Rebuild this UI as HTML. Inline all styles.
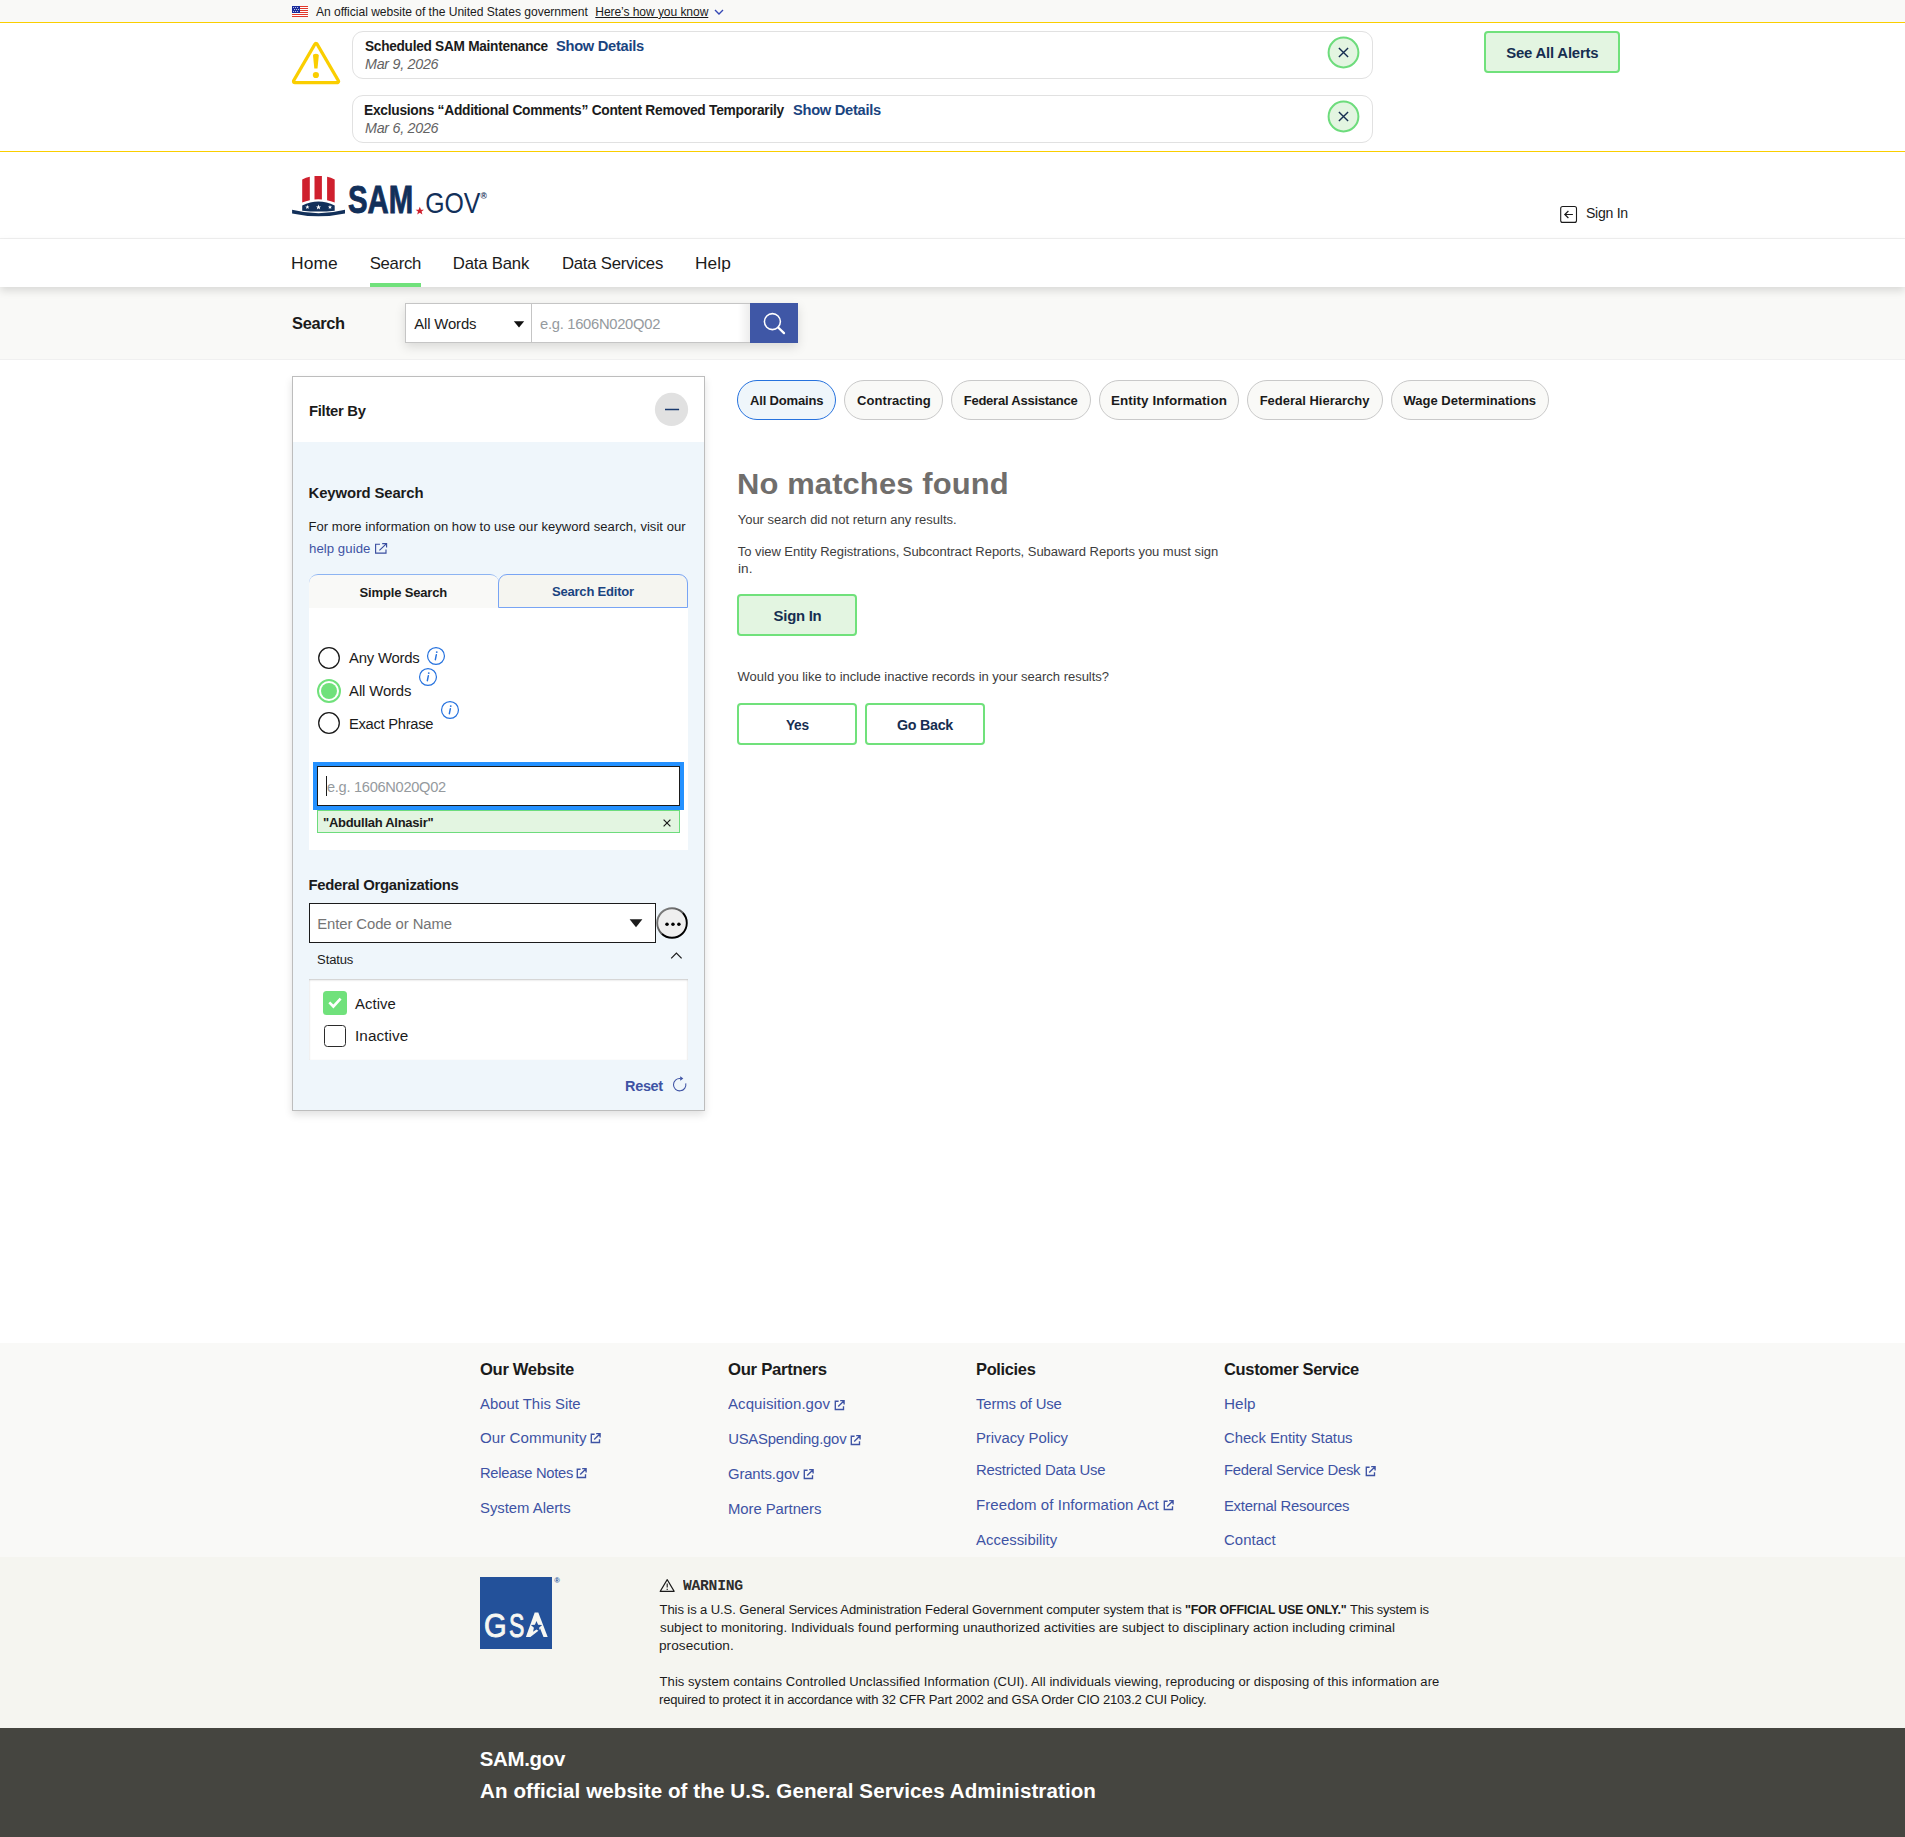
<!DOCTYPE html>
<html lang="en"><head><meta charset="utf-8"><title>SAM.gov | Search</title>
<style>

html,body{margin:0;padding:0;background:#fff;}
#page{position:relative;width:1905px;height:1837px;overflow:hidden;background:#fff;font-family:"Liberation Sans",sans-serif;color:#1b1b1b;}
.t{position:absolute;white-space:nowrap;line-height:40px;display:block;transform-origin:0 50%;}
a.t{text-decoration:none;color:inherit;}
h1.t,h2.t,h3.t,p.t{margin:0;font-weight:400;}
.b{position:absolute;box-sizing:border-box;}
svg{position:absolute;overflow:visible;}
.pill{position:absolute;box-sizing:border-box;top:380px;height:40px;border-radius:20px;border:1px solid #c9c9c9;background:#f9f9f7;}
.btn{position:absolute;box-sizing:border-box;border:2px solid #70e17b;border-radius:4px;background:#e3f5e1;}

</style></head>
<body>
<div id="page">
<header>
<div class="b" style="left:0;top:0;width:1905px;height:22px;background:#f9f9f7;"></div>
<svg style="left:292px;top:6px" width="16" height="11" viewBox="0 0 16 11">
<rect width="16" height="11" fill="#fff"/>
<g fill="#e1382b" shape-rendering="crispEdges"><rect y="0" width="16" height="1"/><rect y="2" width="16" height="1"/><rect y="4" width="16" height="1"/><rect y="6" width="16" height="1"/><rect y="8" width="16" height="1"/><rect y="10" width="16" height="1"/></g>
<rect width="8" height="7" fill="#1a2c9c" shape-rendering="crispEdges"/>
<g fill="#fff"><circle cx="1.6" cy="1.6" r=".5"/><circle cx="3.6" cy="1.6" r=".5"/><circle cx="5.6" cy="1.6" r=".5"/><circle cx="2.6" cy="3.5" r=".5"/><circle cx="4.6" cy="3.5" r=".5"/><circle cx="6.6" cy="3.5" r=".5"/><circle cx="1.6" cy="5.4" r=".5"/><circle cx="3.6" cy="5.4" r=".5"/><circle cx="5.6" cy="5.4" r=".5"/></g>
</svg>
<span class="t" style="left:315.90px;top:-8.0px;font-size:12.09px;letter-spacing:-0.022px;">An official website of the United States government</span>
<span class="t" style="left:595.26px;top:-8.0px;font-size:12.09px;letter-spacing:-0.082px;text-decoration:underline;text-underline-offset:1px;text-decoration-thickness:1px;">Here’s how you know</span>
<svg style="left:713.9px;top:8px" width="10" height="8" viewBox="0 0 10 8"><path d="M1 2.1 L5 6 L9 2.1" fill="none" stroke="#3548b5" stroke-width="1.4"/></svg>
<div class="b" style="left:0;top:22px;width:1905px;height:130px;border-top:1px solid #face00;border-bottom:1px solid #face00;background:#fff;"></div>
<svg style="left:290px;top:40px" width="52" height="46" viewBox="0 0 52 46">
<path d="M26 4.9 L47.1 41.3 L4.9 41.3 Z" fill="#face00" stroke="#face00" stroke-width="6" stroke-linejoin="round"/><path d="M26 5.4 L46.7 41.1 L5.3 41.1 Z" fill="#fff"/>
<path d="M23 15.5 Q23 13.8 25.9 13.8 Q28.8 13.8 28.8 15.5 L27.5 28.6 L24.3 28.6 Z" fill="#face00"/>
<circle cx="25.9" cy="35" r="3.1" fill="#face00"/>
</svg>
<div class="b" style="left:352px;top:31px;width:1021px;height:48px;border:1px solid #e1e1e1;border-radius:11px;background:#fff;"></div>
<svg style="left:1327.4px;top:35.5px" width="33" height="33" viewBox="0 0 33 33"><circle cx="16.5" cy="16.5" r="14.9" fill="#e3f5e1" stroke="#6ddc7c" stroke-width="2"/><path d="M11.9 11.9 L21.1 21.1 M21.1 11.9 L11.9 21.1" stroke="#162e51" stroke-width="1.4" fill="none"/></svg>
<div class="b" style="left:352px;top:95px;width:1021px;height:48px;border:1px solid #e1e1e1;border-radius:11px;background:#fff;"></div>
<svg style="left:1327.4px;top:99.5px" width="33" height="33" viewBox="0 0 33 33"><circle cx="16.5" cy="16.5" r="14.9" fill="#e3f5e1" stroke="#6ddc7c" stroke-width="2"/><path d="M11.9 11.9 L21.1 21.1 M21.1 11.9 L11.9 21.1" stroke="#162e51" stroke-width="1.4" fill="none"/></svg>
<span class="t" style="left:364.99px;top:26.0px;font-size:14.88px;font-weight:700;letter-spacing:-0.298px;transform:scaleX(0.9181);">Scheduled SAM Maintenance</span>
<a class="t" href="#" style="left:556.47px;top:26.0px;font-size:14.88px;font-weight:700;color:#1a4480;letter-spacing:-0.298px;transform:scaleX(0.9868);">Show Details</a>
<span class="t" style="left:365.18px;top:44.0px;font-size:14.88px;color:#636363;font-style:italic;letter-spacing:-0.298px;transform:scaleX(0.9623);">Mar 9, 2026</span>
<span class="t" style="left:364.34px;top:90.0px;font-size:14.88px;font-weight:700;letter-spacing:-0.298px;transform:scaleX(0.9270);">Exclusions “Additional Comments” Content Removed Temporarily</span>
<a class="t" href="#" style="left:792.77px;top:90.0px;font-size:14.88px;font-weight:700;color:#1a4480;letter-spacing:-0.298px;transform:scaleX(0.9868);">Show Details</a>
<span class="t" style="left:365.18px;top:108.0px;font-size:14.88px;color:#636363;font-style:italic;letter-spacing:-0.298px;transform:scaleX(0.9623);">Mar 6, 2026</span>
<div class="btn" style="left:1484px;top:31px;width:136px;height:42px;"></div>
<a class="t" href="#" style="left:1506.27px;top:33.0px;font-size:14.88px;font-weight:700;color:#162e51;letter-spacing:-0.191px;">See All Alerts</a>
<svg style="left:288px;top:170px" width="204" height="50" viewBox="288 170 204 50">
<g fill="#cf202e">
<path d="M302.2 179.4 Q306 177.5 309.8 176.8 L309.8 200.2 Q306 201 302.2 202.6 Z"/>
<path d="M314.5 176 L321.9 176 L321.9 199.4 Q318.2 199.1 314.5 199.4 Z"/>
<path d="M327.1 176.8 Q331 177.5 334.7 179.4 L334.7 202.6 Q331 201 327.1 200.2 Z"/>
</g>
<path d="M302.2 205.4 Q318.4 197.4 334.7 205.4 L334.7 210.7 Q318.4 212.4 302.2 210.7 Z" fill="#12305a"/>
<path d="M292.1 209.8 Q318.5 216.6 345 209.8 L345 213.5 Q318.5 219.2 292.1 213.5 Z" fill="#12305a"/>
<g fill="#fff">
<path id="st" d="M0 -2.1 L0.6 -0.65 L2.1 -0.65 L0.9 0.3 L1.3 1.8 L0 0.9 L-1.3 1.8 L-0.9 0.3 L-2.1 -0.65 L-0.6 -0.65 Z" transform="translate(307.4 207.2)"/>
<path d="M0 -2.1 L0.6 -0.65 L2.1 -0.65 L0.9 0.3 L1.3 1.8 L0 0.9 L-1.3 1.8 L-0.9 0.3 L-2.1 -0.65 L-0.6 -0.65 Z" transform="translate(318.5 207.2) scale(1.25)"/>
<path d="M0 -2.1 L0.6 -0.65 L2.1 -0.65 L0.9 0.3 L1.3 1.8 L0 0.9 L-1.3 1.8 L-0.9 0.3 L-2.1 -0.65 L-0.6 -0.65 Z" transform="translate(330 207.2)"/>
</g>
<text x="347.9" y="212.7" font-family="Liberation Sans, sans-serif" font-weight="700" font-size="38.6" fill="#12305a" stroke="#12305a" stroke-width="0.9" textLength="65.2" lengthAdjust="spacingAndGlyphs">SAM</text>
<path d="M0 -2.1 L0.6 -0.65 L2.1 -0.65 L0.9 0.3 L1.3 1.8 L0 0.9 L-1.3 1.8 L-0.9 0.3 L-2.1 -0.65 L-0.6 -0.65 Z" transform="translate(419.8 211) scale(2)" fill="#cf202e"/>
<text x="425.2" y="212.7" font-family="Liberation Sans, sans-serif" font-weight="400" font-size="29.6" fill="#12305a" textLength="55.2" lengthAdjust="spacingAndGlyphs">GOV</text>
<text x="480.6" y="199.4" font-family="Liberation Sans, sans-serif" font-size="8.6" font-weight="700" fill="#12305a">®</text>
</svg>
<svg style="left:1559px;top:205px" width="20" height="20" viewBox="0 0 20 20"><rect x="1.7" y="1.5" width="15.8" height="15.9" rx="2" fill="none" stroke="#1b1b1b" stroke-width="1.1"/><path d="M13.9 9.5 L5.9 9.5 M9.4 6 L5.8 9.5 L9.4 13" fill="none" stroke="#1b1b1b" stroke-width="1.2"/></svg>
<span class="t" style="left:1585.76px;top:193.0px;font-size:14.88px;letter-spacing:-0.298px;transform:scaleX(0.9462);">Sign In</span>
<div class="b" style="left:0;top:238px;width:1905px;height:1px;background:#f0f0f0;"></div>
<div class="b" style="left:0;top:239px;width:1905px;height:48px;background:#fff;box-shadow:0 4px 8px rgba(0,0,0,.125);z-index:2;"></div>
<div class="b" style="left:0;top:287px;width:1905px;height:73px;background:#f9f9f7;border-bottom:1px solid #f0f0f0;z-index:1;"></div>
<a class="t" href="#" style="left:291.24px;top:243.5px;font-size:16.74px;letter-spacing:0.067px;transform:scaleX(1.0407);z-index:3;">Home</a>
<a class="t" href="#" style="left:369.68px;top:243.5px;font-size:16.74px;letter-spacing:-0.274px;z-index:3;">Search</a>
<a class="t" href="#" style="left:452.79px;top:243.5px;font-size:16.74px;letter-spacing:-0.199px;z-index:3;">Data Bank</a>
<a class="t" href="#" style="left:561.89px;top:243.5px;font-size:16.74px;letter-spacing:-0.228px;z-index:3;">Data Services</a>
<a class="t" href="#" style="left:694.95px;top:243.5px;font-size:16.74px;letter-spacing:0.067px;transform:scaleX(1.0326);z-index:3;">Help</a>
<div class="b" style="left:370px;top:283px;width:51px;height:4px;background:#70e17b;z-index:3;"></div>
<span class="t" style="left:292.34px;top:303.5px;font-size:16.74px;font-weight:700;letter-spacing:-0.335px;transform:scaleX(0.9815);z-index:3;">Search</span>
<div class="b" style="left:405px;top:303px;width:393px;height:40px;box-shadow:0 4px 10px rgba(0,0,0,.13);z-index:3;background:#fff;"></div>
<div class="b" style="left:405px;top:303px;width:127px;height:40px;border:1px solid #c5c5c5;background:#fff;z-index:3;"></div>
<div class="b" style="left:531px;top:303px;width:220px;height:40px;border:1px solid #c5c5c5;background:#fff;z-index:3;"></div>
<div class="b" style="left:738px;top:304px;width:12px;height:38px;background:linear-gradient(90deg,rgba(0,0,0,0),rgba(0,0,0,.07));z-index:3;"></div>
<div class="b" style="left:750px;top:303px;width:48px;height:40px;background:#3f57a6;z-index:3;"></div>
<span class="t" style="left:414.30px;top:304.0px;font-size:14.88px;letter-spacing:-0.151px;z-index:3;">All Words</span>
<svg style="left:513px;top:320px;z-index:3" width="12" height="8" viewBox="0 0 12 8"><path d="M0.8 1.2 L11.2 1.2 L6 7.6 Z" fill="#111"/></svg>
<span class="t" style="left:540.04px;top:304.0px;font-size:14.88px;color:#959a9e;letter-spacing:-0.298px;transform:scaleX(0.9926);z-index:3;">e.g. 1606N020Q02</span>
<svg style="left:760px;top:309px;z-index:3" width="28" height="28" viewBox="0 0 28 28"><circle cx="12.4" cy="12.6" r="8" fill="none" stroke="#fff" stroke-width="1.55"/><path d="M18.2 18.5 L24 24.1" stroke="#fff" stroke-width="2.3" stroke-linecap="round"/></svg>
</header>
<main>
<div class="b" style="left:292px;top:376px;width:413px;height:735px;border:1px solid #bdbdbd;background:#eff6fb;box-shadow:0 4px 8px rgba(0,0,0,.12);"></div>
<div class="b" style="left:293px;top:377px;width:411px;height:65px;background:#fff;"></div>
<h2 class="t" style="left:308.57px;top:391.0px;font-size:14.88px;font-weight:700;letter-spacing:-0.298px;transform:scaleX(0.9965);">Filter By</h2>
<svg style="left:654px;top:392px" width="35" height="35" viewBox="0 0 35 35"><circle cx="17.5" cy="17.4" r="16.6" fill="#e1e1e1"/><path d="M11 17.5 L25.1 17.5" stroke="#1a3a6e" stroke-width="1.5"/></svg>
<h3 class="t" style="left:308.57px;top:473.0px;font-size:14.88px;font-weight:700;letter-spacing:-0.125px;">Keyword Search</h3>
<span class="t" style="left:308.48px;top:506.5px;font-size:13.02px;letter-spacing:0.037px;">For more information on how to use our keyword search, visit our</span>
<a class="t" href="#" style="left:308.88px;top:528.5px;font-size:13.02px;color:#3e53a4;letter-spacing:0.052px;transform:scaleX(1.0134);">help guide</a>
<svg style="left:375px;top:543.1px;color:#3a4ea0" width="12.2" height="10.8" viewBox="0 0 12.2 10.8"><path d="M5 1.2 L0.6 1.2 L0.6 10.2 L11 10.2 L11 6.4 M7.2 0.6 L11.6 0.6 L11.6 4.6 M11.3 0.9 L4.4 7.4" fill="none" stroke="currentColor" stroke-width="1.15"/></svg>
<div class="b" style="left:309px;top:607px;width:379px;height:243px;background:#fff;"></div>
<div class="b" style="left:309px;top:574px;width:190px;height:34px;border-top:1px solid #8db4f2;border-radius:9px 9px 0 0;background:#f9f9f7;"></div>
<div class="b" style="left:498px;top:574px;width:190px;height:34px;border:1px solid #78a4f4;border-radius:9px 9px 0 0;background:#f5f5f0;"></div>
<span class="t" style="left:359.60px;top:572.5px;font-size:13.02px;font-weight:700;letter-spacing:-0.174px;">Simple Search</span>
<a class="t" href="#" style="left:552.00px;top:571.5px;font-size:13.02px;font-weight:700;color:#1a4480;letter-spacing:-0.213px;">Search Editor</a>
<svg style="left:316px;top:645px" width="26" height="26" viewBox="0 0 26 26"><circle cx="13" cy="13" r="10.3" fill="#fff" stroke="#1b1b1b" stroke-width="1.3"/></svg>
<svg style="left:316px;top:678px" width="26" height="26" viewBox="0 0 26 26"><circle cx="13" cy="13" r="11" fill="#fff" stroke="#70e17b" stroke-width="2"/><circle cx="13" cy="13" r="8" fill="#70e17b"/></svg>
<svg style="left:316px;top:709.8px" width="26" height="26" viewBox="0 0 26 26"><circle cx="13" cy="13" r="10.3" fill="#fff" stroke="#1b1b1b" stroke-width="1.3"/></svg>
<span class="t" style="left:349.10px;top:638.0px;font-size:14.88px;letter-spacing:-0.240px;">Any Words</span>
<span class="t" style="left:349.10px;top:671.0px;font-size:14.88px;letter-spacing:-0.126px;">All Words</span>
<span class="t" style="left:349.25px;top:704.0px;font-size:14.88px;letter-spacing:-0.298px;transform:scaleX(0.9913);">Exact Phrase</span>
<svg style="left:426px;top:646.2px" width="20" height="20" viewBox="0 0 20 20"><circle cx="10" cy="10" r="8.45" fill="none" stroke="#2672de" stroke-width="1.2"/><circle cx="10.75" cy="6.1" r="0.95" fill="#2672de"/><path d="M10.35 8.7 L9.35 13.7" fill="none" stroke="#2672de" stroke-width="1.45" stroke-linecap="round"/></svg>
<svg style="left:418.2px;top:667.2px" width="20" height="20" viewBox="0 0 20 20"><circle cx="10" cy="10" r="8.45" fill="none" stroke="#2672de" stroke-width="1.2"/><circle cx="10.75" cy="6.1" r="0.95" fill="#2672de"/><path d="M10.35 8.7 L9.35 13.7" fill="none" stroke="#2672de" stroke-width="1.45" stroke-linecap="round"/></svg>
<svg style="left:440.1px;top:700.2px" width="20" height="20" viewBox="0 0 20 20"><circle cx="10" cy="10" r="8.45" fill="none" stroke="#2672de" stroke-width="1.2"/><circle cx="10.75" cy="6.1" r="0.95" fill="#2672de"/><path d="M10.35 8.7 L9.35 13.7" fill="none" stroke="#2672de" stroke-width="1.45" stroke-linecap="round"/></svg>
<div class="b" style="left:317px;top:810px;width:363px;height:23px;border:1px solid #6ddc7c;background:#e3f5e1;"></div>
<div class="b" style="left:313px;top:762px;width:371px;height:48px;border:4px solid #2491ff;background:#fff;"></div>
<div class="b" style="left:317px;top:766px;width:363px;height:40px;border:1px solid #1b1b1b;background:#fff;"></div>
<div class="b" style="left:326px;top:776px;width:1px;height:20px;background:#1b1b1b;"></div>
<span class="t" style="left:326.54px;top:767.0px;font-size:14.88px;color:#959a9e;letter-spacing:-0.298px;transform:scaleX(0.9826);">e.g. 1606N020Q02</span>
<span class="t" style="left:322.79px;top:802.5px;font-size:13.02px;font-weight:700;letter-spacing:-0.260px;transform:scaleX(0.9976);">"Abdullah Alnasir"</span>
<svg style="left:662px;top:818px" width="10" height="10" viewBox="0 0 10 10"><path d="M1.6 1.6 L8.4 8.4 M8.4 1.6 L1.6 8.4" stroke="#1b1b1b" stroke-width="1.2"/></svg>
<h3 class="t" style="left:308.57px;top:865.0px;font-size:14.88px;font-weight:700;letter-spacing:-0.295px;">Federal Organizations</h3>
<div class="b" style="left:309px;top:903px;width:347px;height:40px;border:1px solid #1b1b1b;background:#fff;"></div>
<span class="t" style="left:317.14px;top:904.0px;font-size:14.88px;color:#757575;letter-spacing:-0.086px;">Enter Code or Name</span>
<svg style="left:629px;top:918px" width="14" height="10" viewBox="0 0 14 10"><path d="M0.6 1.2 L13.4 1.2 L7 9.2 Z" fill="#1b1b1b"/></svg>
<svg style="left:655.3px;top:905.9px" width="34" height="34" viewBox="0 0 34 34"><defs><linearGradient id="og" x1="0.15" y1="0.15" x2="0.85" y2="0.85"><stop offset="0" stop-color="#7a7a7a"/><stop offset="0.5" stop-color="#555"/><stop offset="0.55" stop-color="#000"/><stop offset="1" stop-color="#000"/></linearGradient></defs><circle cx="17" cy="17" r="14.8" fill="#efefef" stroke="url(#og)" stroke-width="1.9"/><circle cx="12" cy="18.3" r="1.75" fill="#000"/><circle cx="17.95" cy="18.3" r="1.75" fill="#000"/><circle cx="23.9" cy="18.3" r="1.75" fill="#000"/></svg>
<span class="t" style="left:317.09px;top:939.5px;font-size:13.02px;letter-spacing:-0.119px;">Status</span>
<svg style="left:670.1px;top:950.5px" width="13" height="9" viewBox="0 0 13 9"><path d="M1.2 7.4 L6.4 2 L11.6 7.4" fill="none" stroke="#1b1b1b" stroke-width="1.2"/></svg>
<div class="b" style="left:309px;top:979px;width:379px;height:81px;background:#fff;box-shadow:inset 0 1px 2px rgba(0,0,0,.22);"></div>
<svg style="left:323px;top:991px" width="24" height="24" viewBox="0 0 24 24"><rect width="24" height="24" rx="3.5" fill="#70e17b"/><path d="M6.3 11.3 L10.4 15.5 L17.6 7.7" fill="none" stroke="#fff" stroke-width="2.6"/></svg>
<span class="t" style="left:355.10px;top:984.0px;font-size:14.88px;letter-spacing:0.017px;">Active</span>
<div class="b" style="left:324px;top:1025px;width:22px;height:22px;border:1.3px solid #2b2b2b;border-radius:3.5px;background:#fff;"></div>
<span class="t" style="left:354.50px;top:1016.0px;font-size:14.88px;letter-spacing:0.060px;transform:scaleX(1.0297);">Inactive</span>
<a class="t" href="#" style="left:624.60px;top:1066.0px;font-size:14.88px;font-weight:700;color:#3e53a4;letter-spacing:-0.298px;transform:scaleX(0.9707);">Reset</a>
<svg style="left:670px;top:1075px" width="20" height="20" viewBox="0 0 20 20"><path d="M10.30 3.50 A6.2 6.2 0 1 0 15.76 8.41" fill="none" stroke="#3e53a4" stroke-width="1.05"/><path d="M10.2 1.3 L13.3 3.6 L10.2 5.8 Z" fill="#3e53a4"/></svg>
<div class="pill" style="left:737px;width:99px;background:#eff6fb;border-color:#2672de;"></div>
<div class="pill" style="left:844px;width:99px;"></div>
<div class="pill" style="left:951px;width:140px;"></div>
<div class="pill" style="left:1099px;width:140px;"></div>
<div class="pill" style="left:1247px;width:136px;"></div>
<div class="pill" style="left:1391px;width:158px;"></div>
<span class="t" style="left:750.00px;top:380.5px;font-size:13.02px;font-weight:700;letter-spacing:-0.169px;">All Domains</span>
<span class="t" style="left:857.19px;top:380.5px;font-size:13.02px;font-weight:700;letter-spacing:0.052px;transform:scaleX(1.0026);">Contracting</span>
<span class="t" style="left:963.69px;top:380.5px;font-size:13.02px;font-weight:700;letter-spacing:-0.237px;">Federal Assistance</span>
<span class="t" style="left:1110.96px;top:380.5px;font-size:13.02px;font-weight:700;letter-spacing:0.052px;transform:scaleX(1.0325);">Entity Information</span>
<span class="t" style="left:1259.69px;top:380.5px;font-size:13.02px;font-weight:700;letter-spacing:-0.015px;">Federal Hierarchy</span>
<span class="t" style="left:1403.50px;top:380.5px;font-size:13.02px;font-weight:700;">Wage Determinations</span>
<h1 class="t" style="left:737.07px;top:463.5px;font-size:30.13px;font-weight:700;color:#706e6c;letter-spacing:0.121px;transform:scaleX(1.0265);">No matches found</h1>
<span class="t" style="left:737.70px;top:499.5px;font-size:13.02px;color:#3d3d3d;letter-spacing:-0.013px;">Your search did not return any results.</span>
<span class="t" style="left:737.70px;top:531.5px;font-size:13.02px;color:#3d3d3d;letter-spacing:-0.043px;">To view Entity Registrations, Subcontract Reports, Subaward Reports you must sign</span>
<span class="t" style="left:737.55px;top:548.5px;font-size:13.02px;color:#3d3d3d;letter-spacing:0.052px;transform:scaleX(1.0452);">in.</span>
<div class="btn" style="left:737px;top:594px;width:120px;height:42px;"></div>
<span class="t" style="left:773.57px;top:596.0px;font-size:14.88px;font-weight:700;color:#162e51;letter-spacing:-0.240px;">Sign In</span>
<span class="t" style="left:737.60px;top:656.5px;font-size:13.02px;color:#3d3d3d;letter-spacing:-0.025px;">Would you like to include inactive records in your search results?</span>
<div class="btn" style="left:737px;top:703px;width:120px;height:42px;background:#fff;"></div>
<div class="btn" style="left:865px;top:703px;width:120px;height:42px;background:#fff;"></div>
<span class="t" style="left:786.19px;top:705.0px;font-size:14.88px;font-weight:700;color:#162e51;letter-spacing:-0.298px;transform:scaleX(0.9205);">Yes</span>
<span class="t" style="left:896.95px;top:705.0px;font-size:14.88px;font-weight:700;color:#162e51;letter-spacing:-0.298px;transform:scaleX(0.9604);">Go Back</span>
</main>
<footer>
<div class="b" style="left:0;top:1343px;width:1905px;height:214px;background:#f9f9f7;"></div>
<div class="b" style="left:0;top:1557px;width:1905px;height:171px;background:#f5f5f0;"></div>
<div class="b" style="left:0;top:1728px;width:1905px;height:109px;background:#454540;"></div>
<h3 class="t" style="left:479.98px;top:1349.5px;font-size:16.74px;font-weight:700;letter-spacing:-0.335px;transform:scaleX(0.9928);">Our Website</h3>
<h3 class="t" style="left:727.98px;top:1349.5px;font-size:16.74px;font-weight:700;letter-spacing:-0.292px;">Our Partners</h3>
<h3 class="t" style="left:976.17px;top:1349.5px;font-size:16.74px;font-weight:700;letter-spacing:-0.335px;transform:scaleX(0.9815);">Policies</h3>
<h3 class="t" style="left:1224.18px;top:1349.5px;font-size:16.74px;font-weight:700;letter-spacing:-0.335px;transform:scaleX(0.9850);">Customer Service</h3>
<a class="t" href="#" style="left:480.10px;top:1384.0px;font-size:14.88px;color:#3e53a4;letter-spacing:-0.008px;">About This Site</a>
<a class="t" href="#" style="left:479.89px;top:1418.0px;font-size:14.88px;color:#3e53a4;letter-spacing:0.060px;transform:scaleX(1.0156);">Our Community</a>
<svg style="left:590.2px;top:1432.6px;color:#3e53a4" width="10.8" height="10.8" viewBox="0 0 10.8 10.8"><path d="M4.6 1.3 L1.3 1.3 L1.3 9.5 L9.5 9.5 L9.5 6.2 M6.2 0.7 L10.1 0.7 L10.1 4.6 M9.8 1 L4.2 6.6" fill="none" stroke="currentColor" stroke-width="1.35"/></svg>
<a class="t" href="#" style="left:479.95px;top:1453.0px;font-size:14.88px;color:#3e53a4;letter-spacing:-0.298px;transform:scaleX(0.9926);">Release Notes</a>
<svg style="left:576.3px;top:1467.6px;color:#3e53a4" width="10.8" height="10.8" viewBox="0 0 10.8 10.8"><path d="M4.6 1.3 L1.3 1.3 L1.3 9.5 L9.5 9.5 L9.5 6.2 M6.2 0.7 L10.1 0.7 L10.1 4.6 M9.8 1 L4.2 6.6" fill="none" stroke="currentColor" stroke-width="1.35"/></svg>
<a class="t" href="#" style="left:480.04px;top:1488.0px;font-size:14.88px;color:#3e53a4;letter-spacing:-0.026px;">System Alerts</a>
<a class="t" href="#" style="left:728.20px;top:1384.0px;font-size:14.88px;color:#3e53a4;letter-spacing:0.060px;transform:scaleX(1.0109);">Acquisition.gov</a>
<svg style="left:834.0px;top:1399.6px;color:#3e53a4" width="10.8" height="10.8" viewBox="0 0 10.8 10.8"><path d="M4.6 1.3 L1.3 1.3 L1.3 9.5 L9.5 9.5 L9.5 6.2 M6.2 0.7 L10.1 0.7 L10.1 4.6 M9.8 1 L4.2 6.6" fill="none" stroke="currentColor" stroke-width="1.35"/></svg>
<a class="t" href="#" style="left:728.17px;top:1419.0px;font-size:14.88px;color:#3e53a4;letter-spacing:-0.225px;">USASpending.gov</a>
<svg style="left:850.4px;top:1434.6px;color:#3e53a4" width="10.8" height="10.8" viewBox="0 0 10.8 10.8"><path d="M4.6 1.3 L1.3 1.3 L1.3 9.5 L9.5 9.5 L9.5 6.2 M6.2 0.7 L10.1 0.7 L10.1 4.6 M9.8 1 L4.2 6.6" fill="none" stroke="currentColor" stroke-width="1.35"/></svg>
<a class="t" href="#" style="left:728.00px;top:1454.0px;font-size:14.88px;color:#3e53a4;letter-spacing:-0.141px;">Grants.gov</a>
<svg style="left:803.0px;top:1469.4px;color:#3e53a4" width="10.8" height="10.8" viewBox="0 0 10.8 10.8"><path d="M4.6 1.3 L1.3 1.3 L1.3 9.5 L9.5 9.5 L9.5 6.2 M6.2 0.7 L10.1 0.7 L10.1 4.6 M9.8 1 L4.2 6.6" fill="none" stroke="currentColor" stroke-width="1.35"/></svg>
<a class="t" href="#" style="left:728.04px;top:1489.0px;font-size:14.88px;color:#3e53a4;letter-spacing:-0.077px;">More Partners</a>
<a class="t" href="#" style="left:976.07px;top:1384.0px;font-size:14.88px;color:#3e53a4;letter-spacing:-0.172px;">Terms of Use</a>
<a class="t" href="#" style="left:975.94px;top:1418.0px;font-size:14.88px;color:#3e53a4;letter-spacing:-0.040px;">Privacy Policy</a>
<a class="t" href="#" style="left:975.94px;top:1450.0px;font-size:14.88px;color:#3e53a4;letter-spacing:-0.191px;">Restricted Data Use</a>
<a class="t" href="#" style="left:975.93px;top:1485.0px;font-size:14.88px;color:#3e53a4;letter-spacing:0.060px;transform:scaleX(1.0100);">Freedom of Information Act</a>
<svg style="left:1162.5px;top:1500.4px;color:#3e53a4" width="10.8" height="10.8" viewBox="0 0 10.8 10.8"><path d="M4.6 1.3 L1.3 1.3 L1.3 9.5 L9.5 9.5 L9.5 6.2 M6.2 0.7 L10.1 0.7 L10.1 4.6 M9.8 1 L4.2 6.6" fill="none" stroke="currentColor" stroke-width="1.35"/></svg>
<a class="t" href="#" style="left:976.10px;top:1520.0px;font-size:14.88px;color:#3e53a4;letter-spacing:0.007px;">Accessibility</a>
<a class="t" href="#" style="left:1223.91px;top:1384.0px;font-size:14.88px;color:#3e53a4;letter-spacing:0.060px;transform:scaleX(1.0273);">Help</a>
<a class="t" href="#" style="left:1224.00px;top:1418.0px;font-size:14.88px;color:#3e53a4;letter-spacing:-0.069px;">Check Entity Status</a>
<a class="t" href="#" style="left:1223.94px;top:1450.0px;font-size:14.88px;color:#3e53a4;letter-spacing:-0.298px;">Federal Service Desk</a>
<svg style="left:1364.5px;top:1466.4px;color:#3e53a4" width="10.8" height="10.8" viewBox="0 0 10.8 10.8"><path d="M4.6 1.3 L1.3 1.3 L1.3 9.5 L9.5 9.5 L9.5 6.2 M6.2 0.7 L10.1 0.7 L10.1 4.6 M9.8 1 L4.2 6.6" fill="none" stroke="currentColor" stroke-width="1.35"/></svg>
<a class="t" href="#" style="left:1223.94px;top:1486.0px;font-size:14.88px;color:#3e53a4;letter-spacing:-0.246px;">External Resources</a>
<a class="t" href="#" style="left:1224.00px;top:1520.0px;font-size:14.88px;color:#3e53a4;letter-spacing:0.060px;transform:scaleX(1.0024);">Contact</a>
<svg style="left:480px;top:1577px" width="82" height="72" viewBox="0 0 82 72"><rect width="72" height="72" fill="#23519a"/>
<g font-family="Liberation Sans, sans-serif" font-size="33.4" fill="#f7f7f2" stroke="#f7f7f2" stroke-width="0.9">
<text transform="translate(3.9 59.9) scale(0.87 1)">G</text>
<text transform="translate(29.1 59.9) scale(0.69 1)">S</text></g>
<polygon points="54.7,35.6 58.3,35.6 67.7,59.9 45.9,59.9" fill="#f7f7f2"/>
<polygon points="50.4,59.9 63.5,59.9 60.1,51.4 59.4,52.9" fill="#23519a"/>
<polygon points="56.50,44.00 58.09,47.72 62.11,48.08 59.07,50.73 59.97,54.67 56.50,52.60 53.03,54.67 53.93,50.73 50.89,48.08 54.91,47.72" fill="#23519a"/>
<text x="74.2" y="6" font-family="Liberation Sans, sans-serif" font-size="7.6" font-weight="700" fill="#23519a">®</text></svg>
<svg style="left:659px;top:1578px" width="17" height="15" viewBox="0 0 17 15"><path d="M8.2 1.6 L15.2 13.4 L1.2 13.4 Z" fill="none" stroke="#1b1b1b" stroke-width="1.1" stroke-linejoin="round"/><path d="M8.2 5.6 L8.2 9.6 M8.2 10.8 L8.2 12" stroke="#1b1b1b" stroke-width="1.1"/></svg>
<span class="t" style="left:683.40px;top:1567.0px;font-size:15.00px;font-weight:700;color:#2e2e2e;font-family:'Liberation Mono','DejaVu Sans Mono',monospace;letter-spacing:-0.300px;transform:scaleX(0.9810);">WARNING</span>
<span class="t" style="left:659.60px;top:1589.5px;font-size:13.02px;letter-spacing:-0.093px;">This is a U.S. General Services Administration Federal Government computer system that is</span>
<span class="t" style="left:1184.62px;top:1589.5px;font-size:13.02px;font-weight:700;letter-spacing:-0.260px;transform:scaleX(0.9601);">"FOR OFFICIAL USE ONLY."</span>
<span class="t" style="left:1350.10px;top:1589.5px;font-size:13.02px;letter-spacing:-0.260px;transform:scaleX(0.9980);">This system is</span>
<span class="t" style="left:659.59px;top:1607.5px;font-size:13.02px;letter-spacing:0.052px;transform:scaleX(1.0187);">subject to monitoring. Individuals found performing unauthorized activities are subject to disciplinary action including criminal</span>
<span class="t" style="left:658.95px;top:1625.5px;font-size:13.02px;letter-spacing:0.052px;transform:scaleX(1.0448);">prosecution.</span>
<span class="t" style="left:659.60px;top:1661.5px;font-size:13.02px;letter-spacing:0.052px;">This system contains Controlled Unclassified Information (CUI). All individuals viewing, reproducing or disposing of this information are</span>
<span class="t" style="left:658.99px;top:1679.5px;font-size:13.02px;letter-spacing:-0.191px;">required to protect it in accordance with 32 CFR Part 2002 and GSA Order CIO 2103.2 CUI Policy.</span>
<span class="t" style="left:479.68px;top:1738.5px;font-size:20.46px;font-weight:700;color:#fff;letter-spacing:-0.291px;">SAM.gov</span>
<span class="t" style="left:479.68px;top:1770.5px;font-size:20.46px;font-weight:700;color:#fff;letter-spacing:0.082px;transform:scaleX(1.0065);">An official website of the U.S. General Services Administration</span>
</footer>
</div>
</body></html>
